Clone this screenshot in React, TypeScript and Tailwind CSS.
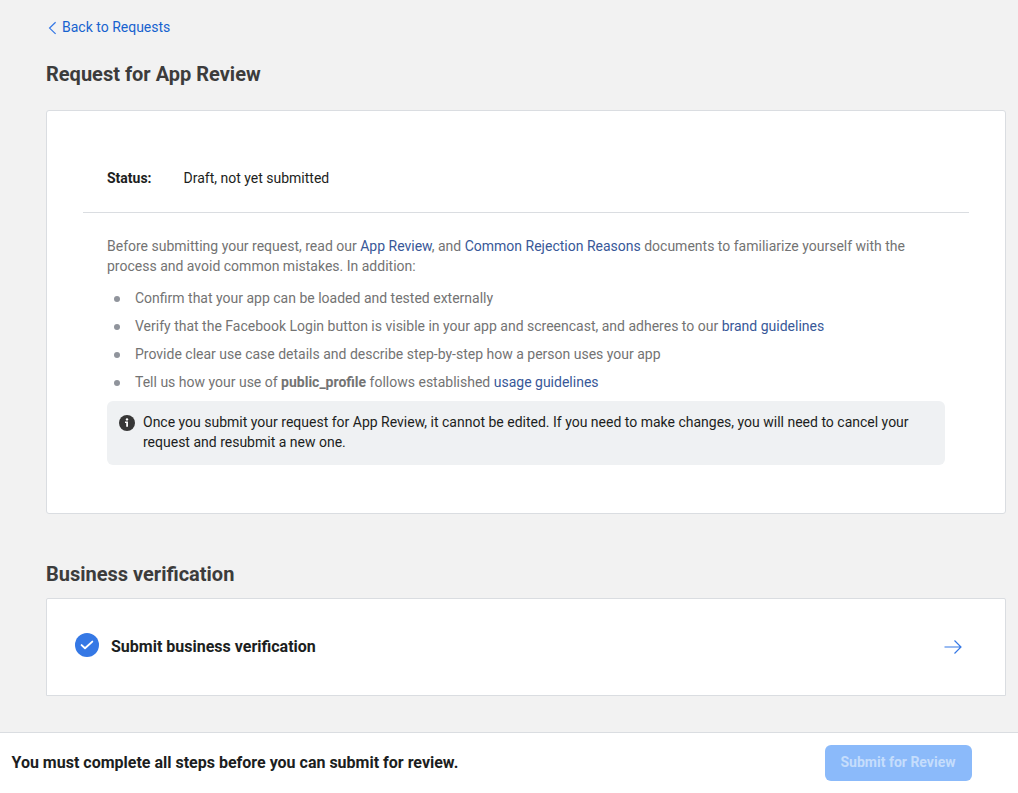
import React from "react";

const bullet = "flex h-7 items-center before:mt-[1.5px] before:ml-[7.25px] before:mr-[15.25px] before:size-[5.5px] before:rounded-full before:bg-[#90949c] before:content-['']";

function Link({ children }: { children: React.ReactNode }) {
  return <a className="text-[#385898]">{children}</a>;
}

export default function App() {
  return (
    <div className="flex h-[793px] flex-col bg-[#f2f2f2] font-[Roboto,sans-serif] text-sm leading-5 text-[#1c1e21]">
      <main className="flex-1 pl-[46px] pr-3 pt-[17px]">
        <a className="flex items-center text-[#1763cf]">
          <svg className="ml-[2px] mr-[5px] mt-[2px]" width="9" height="14" viewBox="0 0 9 14" fill="none" stroke="#3578e5" strokeWidth="1.25">
            <path d="M7.6 1.3 1.6 7.1l6 5.8" />
          </svg>
          Back to Requests
        </a>
        <h1 className="mt-[25px] text-xl font-bold leading-6 text-[#3c3c3c]">Request for App Review</h1>
        <section className="mt-6 h-[404px] rounded-[3px] border border-[#dadde1] bg-white px-9 pt-[57px]">
          <div className="flex h-[45px] border-b border-[#dadde1] pl-6">
            <strong className="w-[76.5px]">Status:</strong>
            <span>Draft, not yet submitted</span>
          </div>
          <div className="px-6 pt-[23px] text-[#737373]">
            <p>
              Before submitting your request, read our <Link>App Review</Link>, and <Link>Common Rejection Reasons</Link> documents to familiarize yourself with the process and avoid common mistakes. In addition:
            </p>
            <ul className="mt-2">
              <li className={bullet}>Confirm that your app can be loaded and tested externally</li>
              <li className={bullet}><span>Verify that the Facebook Login button is visible in your app and screencast, and adheres to our <Link>brand guidelines</Link></span></li>
              <li className={bullet}>Provide clear use case details and describe step-by-step how a person uses your app</li>
              <li className={bullet}><span>Tell us how your use of <strong>public_profile</strong> follows established <Link>usage guidelines</Link></span></li>
            </ul>
            <div className="mt-[5px] flex h-16 gap-2 rounded-md bg-[#eff1f3] pl-3 pr-6 pt-[11px] text-[#1c1e21]">
              <svg className="mt-[3px] shrink-0" width="16" height="16" viewBox="0 0 16 16">
                <circle cx="8" cy="8" r="8" fill="#373737" />
                <path d="M6 6.5h3v5.2H7.2V8H6Z" fill="white" />
                <circle cx="8" cy="4.4" r="1.2" fill="white" />
              </svg>
              <p>Once you submit your request for App Review, it cannot be edited. If you need to make changes, you will need to cancel your request and resubmit a new one.</p>
            </div>
          </div>
        </section>
        <h2 className="mt-12 text-xl font-bold leading-6 text-[#3c3c3c]">Business verification</h2>
        <section className="mt-3 flex h-[98px] items-center rounded-t-[2px] border border-[#dadde1] bg-white pl-7 pr-[42px]">
          <svg className="mb-1" width="24" height="24" viewBox="0 0 24 24" fill="none">
            <circle cx="12" cy="12" r="12" fill="#3578e5" />
            <path d="m6.6 12.1 3.4 3.2 7.3-6.7" stroke="white" strokeWidth="1.9" strokeLinecap="round" strokeLinejoin="round" />
          </svg>
          <strong className="ml-3 flex-1 text-base">Submit business verification</strong>
          <svg width="20" height="16" viewBox="0 0 20 16" fill="none" stroke="#3578e5" strokeWidth="1.15">
            <path d="M1.5 8H18M11.5 1.5 18 8l-6.5 6.5" />
          </svg>
        </section>
      </main>
      <footer className="flex h-[61px] items-center justify-between border-t border-[#dadde1] bg-white pl-[11.5px] pr-[46px]">
        <strong className="text-base">You must complete all steps before you can submit for review.</strong>
        <button className="h-9 w-[147px] rounded-md bg-[#8bbafa] pb-[2px] pr-px font-bold text-[#c5ddfc]">Submit for Review</button>
      </footer>
    </div>
  );
}
